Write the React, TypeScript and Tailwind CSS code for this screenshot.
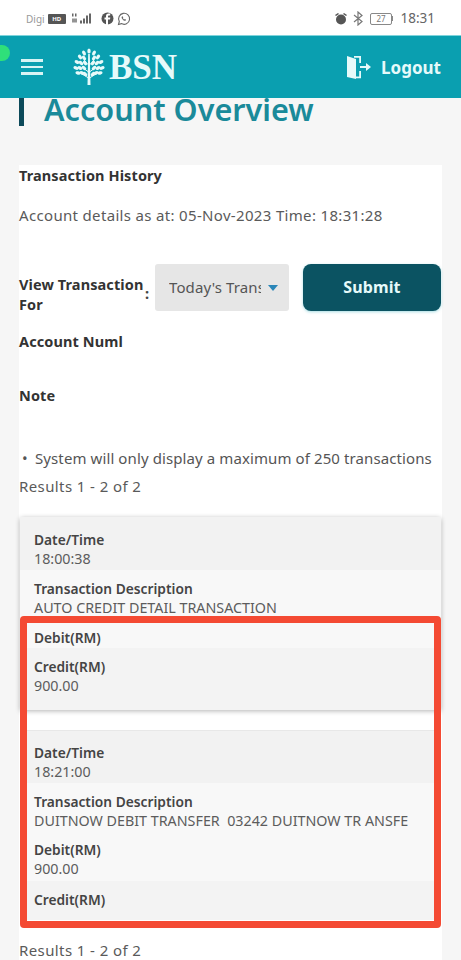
const font = { fontFamily: '"Noto Sans", sans-serif' };

function Tree() {
  const leaves: [number, number, number][] = [
    [16, 3, 0], [11, 5, -30], [21, 5, 30], [7, 9, -40], [25, 9, 40], [11, 10, -40], [21, 10, 40],
    [4, 14, -60], [28, 14, 60], [8, 15, -50], [24, 15, 50], [12, 15, -40], [20, 15, 40],
    [3, 20, -70], [29, 20, 70], [7, 20, -60], [25, 20, 60], [11, 20, -50], [21, 20, 50],
    [5, 25, -80], [27, 25, 80], [9, 25, -60], [23, 25, 60], [12, 26, -50], [20, 26, 50],
  ];
  return (
    <svg width="32" height="38" viewBox="0 0 32 38" fill="#e6fafa">
      {leaves.map(([x, y, r], i) => (
        <ellipse key={i} cx={x} cy={y} rx="1.7" ry="2.6" transform={`rotate(${r} ${x} ${y})`} />
      ))}
      <path d="M14.5 37 L15.2 6 H16.8 L17.5 37 Z" />
      <path d="M15.5 30 L9 26 M16.5 30 L23 26 M15.5 24 L9 19 M16.5 24 L23 19 M15.5 17 L11 12 M16.5 17 L21 12" stroke="#e6fafa" strokeWidth="1" fill="none" />
    </svg>
  );
}

function Row({ label, value, className }: { label: string; value?: string; className: string }) {
  return (
    <div className={className}>
      <div className="text-[13.75px] leading-[19px] font-semibold text-[#444]">{label}</div>
      {value && <div className="text-[14.3px] leading-[19px] text-[#5c5c5c] whitespace-pre">{value}</div>}
    </div>
  );
}

export default function App() {
  return (
    <div className="relative w-[461px] h-[960px] overflow-hidden bg-[#f6f6f6]" style={font}>
      {/* status bar */}
      <div className="h-[35px] bg-white flex items-center justify-between pl-[26px] pr-[26px] pt-[2px] text-[#777]">
        <div className="flex items-center">
          <span className="text-[10px] leading-none text-[#999]">Digi</span>
          <span className="ml-[3px] w-[18px] h-[10px] rounded-[1px] bg-[#555] text-white text-[6px] leading-[10px] text-center font-bold">HD</span>
          <svg width="23" height="13" viewBox="0 0 23 12" fill="#666" className="ml-[5px]">
            <rect x="1" y="1" width="1.5" height="3" />
            <rect x="4" y="1" width="1.5" height="3" />
            <rect x="1" y="6" width="5" height="4" opacity=".7" />
            <rect x="9" y="8" width="2" height="3" />
            <rect x="12" y="6" width="2" height="5" />
            <rect x="15" y="3" width="2" height="8" />
            <rect x="18" y="1" width="2" height="10" />
          </svg>
          <svg width="13" height="13" viewBox="0 0 13 13" className="ml-[7px]">
            <circle cx="6.5" cy="6.5" r="6" fill="#555" />
            <path d="M7 13V7.5h2l.3-2H7V4.4c0-.7.3-1 1-1h1.2V1.6H7.6C5.8 1.6 5 2.7 5 4.2v1.3H3.5v2H5V13z" fill="#fff" />
          </svg>
          <svg width="14" height="14" viewBox="0 0 14 14" fill="none" stroke="#666" strokeWidth="1.1" className="ml-[3px]">
            <path d="M1.5 12.5l.8-3a5.5 5.5 0 1 1 2.1 2.1z" />
            <path d="M5 4.5c-.6.6-.5 1.6.5 2.8s2.2 1.9 3 1.4l.6-.9-1.3-.8-.6.5c-.6-.2-1.2-.9-1.4-1.4l.5-.6-.7-1.3z" fill="#666" stroke="none" />
          </svg>
        </div>
        <div className="flex items-center gap-[5px]">
          <svg width="14" height="14" viewBox="0 0 14 14" fill="#555">
            <circle cx="7" cy="7.5" r="5" />
            <path d="M1 3l3-2 1 1-3 2zM13 3l-3-2-1 1 3 2z" />
          </svg>
          <svg width="10" height="15" viewBox="0 0 10 15" fill="none" stroke="#777" strokeWidth="1.2">
            <path d="M1 4l8 6.5-4 3.5V1l4 3.5L1 11" />
          </svg>
          <div className="flex items-center ml-[2px]">
            <div className="w-[22px] h-[12px] border border-[#888] rounded-[2px] text-[8px] leading-[10px] text-center text-[#777]">27</div>
            <div className="w-[1.5px] h-[5px] bg-[#888]" />
          </div>
          <span className="text-[13.5px] leading-none text-[#666] ml-[2px]">18:31</span>
        </div>
      </div>

      {/* header */}
      <header className="h-[63px] bg-[#0a9fb0] flex items-center pl-[21px] pr-[20px] border-t border-[#7fd4dc]">
        <div className="flex flex-col gap-[4px] w-[22px]">
          <span className="h-[2.5px] bg-[#d8f4f4]" />
          <span className="h-[2.5px] bg-[#d8f4f4]" />
          <span className="h-[2.5px] bg-[#d8f4f4]" />
        </div>
        <div className="ml-[30px]"><Tree /></div>
        <span className="ml-[4px] text-[35px] leading-none font-bold text-[#e6fafa]" style={{ fontFamily: '"Liberation Serif", serif' }}>BSN</span>
        <div className="ml-auto flex items-center gap-[9px]">
          <svg width="26" height="25" viewBox="0 0 26 25" fill="#e6fafa">
            <path d="M1 1l9 3v20l-9-2z" />
            <path d="M2 1h13v7h-1.8V2.8H8V1zM10 21.5h3.2V16H15v7.3h-5z" />
            <path d="M14 11h6V8l5 4-5 4v-3h-6z" />
          </svg>
          <span className="text-[17px] leading-none font-bold text-[#e6fafa]">Logout</span>
        </div>
      </header>

      {/* page title, scrolled under the header */}
      <div className="h-[28px] ml-[19px] flex overflow-hidden">
        <div className="w-[5px] bg-[#0d4a5a]" />
        <h1 className="ml-[20px] -mt-[7px] text-[30.6px] leading-[36px] font-semibold text-[#1a8a9a] whitespace-nowrap">Account Overview</h1>
      </div>

      {/* content card */}
      <main className="mt-[39px] mx-[19px] w-[423px] bg-white text-[14.5px] tracking-[0.1px]">
        <div className="h-[22px] leading-[20px] font-bold text-[#333]">Transaction History</div>
        <div className="mt-[18px] h-[22px] leading-[20px] text-[15px] tracking-[0.33px] text-[#5a5a5a] whitespace-nowrap">Account details as at: 05-Nov-2023 Time: 18:31:28</div>

        <div className="mt-[37px] h-[47px] flex items-center">
          <div className="w-[126px] pt-[12px] leading-[20px] font-bold text-[#333]">View Transaction For</div>
          <div className="w-[10px] pt-[12px] font-bold text-[#444]">:</div>
          <div className="w-[134px] h-[47px] bg-[#e6e6e6] rounded-[3px] flex items-center pl-[14px] pr-[11px] text-[#555]">
            <span className="w-[92px] overflow-hidden whitespace-nowrap text-[15px]">Today's Transactions</span>
            <span className="ml-auto w-0 h-0 border-x-[5px] border-x-transparent border-t-[6px] border-t-[#2a86b8]" />
          </div>
          <button className="ml-[14px] w-[138px] h-[47px] pb-[2px] rounded-[8px] bg-[#0b5362] text-[#e6fafa] font-bold text-[16px] shadow-[0_1px_3px_rgba(10,159,176,0.35)]">Submit</button>
        </div>

        <div className="mt-[20px] h-[22px] leading-[20px] font-bold text-[#333]">Account Numl</div>
        <div className="mt-[32px] h-[22px] leading-[20px] font-bold text-[#333]">Note</div>
        <div className="mt-[41px] h-[22px] leading-[20px] text-[15px] tracking-[0.1px] text-[#555] flex whitespace-nowrap">
          <span className="ml-[3px] w-[13px]">•</span>
          <span>System will only display a maximum of 250 transactions</span>
        </div>
        <div className="mt-[6px] h-[22px] leading-[20px] text-[15px] tracking-[0.4px] text-[#5a5a5a]">Results 1 - 2 of 2</div>

        <section className="mt-[19px] mx-[1px] w-[421px] tracking-normal rounded-t-[3px] shadow-[0_1px_5px_rgba(0,0,0,0.3)]">
          <Row className="h-[53px] bg-[#f2f2f2] pt-[13px] pl-[14px]" label="Date/Time" value="18:00:38" />
          <Row className="h-[49px] bg-[#f8f8f8] pt-[9px] pl-[14px]" label="Transaction Description" value="AUTO CREDIT DETAIL TRANSACTION" />
          <Row className="h-[29px] bg-[#f8f8f8] pt-[9px] pl-[14px]" label="Debit(RM)" />
          <Row className="h-[62px] bg-[#f3f3f3] pt-[9px] pl-[14px]" label="Credit(RM)" value="900.00" />
        </section>

        <section className="mt-[20px] mx-[1px] w-[421px] tracking-normal border-t border-[#e8e8e8]">
          <Row className="h-[52px] bg-[#f2f2f2] pt-[12px] pl-[14px]" label="Date/Time" value="18:21:00" />
          <Row className="h-[48px] bg-[#f8f8f8] pt-[9px] pl-[14px]" label="Transaction Description" value="DUITNOW DEBIT TRANSFER  03242 DUITNOW TR ANSFE" />
          <Row className="h-[50px] bg-[#f8f8f8] pt-[9px] pl-[14px]" label="Debit(RM)" value="900.00" />
          <Row className="h-[39px] bg-[#f3f3f3] pt-[9px] pl-[14px]" label="Credit(RM)" />
        </section>

        <div className="mt-[20px] h-[22px] leading-[20px] text-[15px] tracking-[0.4px] text-[#5a5a5a]">Results 1 - 2 of 2</div>
      </main>

      {/* overlays */}
      <div className="absolute left-0 top-[45px] w-[10px] h-[16px] rounded-r-full bg-[#2fe07a]" />
      <div className="absolute left-[20px] top-[616px] w-[421px] h-[312px] border-[7px] border-[#f44a33] rounded-[4px]" />
    </div>
  );
}
